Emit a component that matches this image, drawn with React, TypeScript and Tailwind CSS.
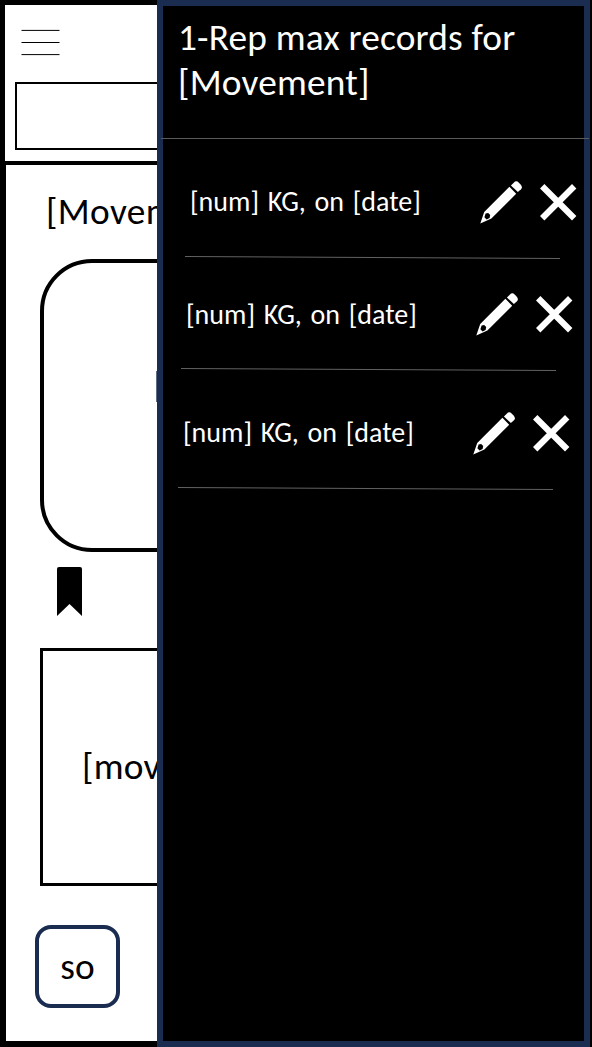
import React from "react";

type RecordRow = { id: number; rowClass: string; textClass: string };

const records: RecordRow[] = [
  { id: 1, rowClass: "h-[120px] pl-[22px]", textClass: "" },
  { id: 2, rowClass: "h-[112px] pl-[18px]", textClass: "pt-[2px]" },
  { id: 3, rowClass: "h-[119px] pl-[15px]", textClass: "" },
];

function PencilIcon() {
  return (
    <svg className="mt-px shrink-0" width="42" height="43" viewBox="0 0 42 43" fill="#fff" aria-hidden="true">
      <path d="M34 1.4Q36.2 -.8 38.9 1.7L40.6 3.4Q43 6.2 41 8.2L37.9 11.1L30.9 4.5Z" />
      <path
        fillRule="evenodd"
        d="M29.4 5.8L36.2 12.8L11.4 37.6L.3 42.5L4.2 31ZM5.6 32.4L4.4 36.2L6.6 38.4L9.6 37L10.2 34L8.2 32Z"
      />
    </svg>
  );
}

function CrossIcon() {
  return (
    <svg className="block" width="37" height="37" viewBox="0 0 37 37" stroke="#fff" strokeWidth="6.2" aria-hidden="true">
      <path d="M2.2 2.2L34.2 34.2M34.2 2.2L2.2 34.2" />
    </svg>
  );
}

function Page() {
  return (
    <main className="flex h-[1047px] w-[157px] shrink-0 flex-col overflow-hidden pt-[5px] pb-[6px] text-black">
      <header className="ml-[5px] h-[156px] bg-white pt-[24px]">
        <button aria-label="Menu" className="ml-[16px] block h-[28px] w-[39px]">
          <svg width="39" height="28" viewBox="0 0 39 28" stroke="#000">
            <path d="M.5 1.4H38.5M.5 13.5H38.5M.5 25.6H38.5" />
          </svg>
        </button>
        <div className="mt-[25px] ml-[10px] h-[68px] w-[400px] border-2 border-black" />
      </header>
      <section className="mt-[4px] ml-[6px] h-[876px] bg-white pt-[24px]">
        <h2 className="ml-[40px] h-[45px] text-[37.33px] leading-[45px] tracking-[0.35px] whitespace-nowrap">[Movement]</h2>
        <div className="mt-[25px] ml-[34px] flex h-[293px] w-[360px] items-center rounded-[52px] border-4 border-black pl-[112px]">
          <div className="mt-[-38px] h-[31px] w-[20px] bg-[#1a2c50]/70" />
        </div>
        <svg className="mt-[15px] ml-[51px] block" width="25" height="49" viewBox="0 0 25 49" aria-hidden="true">
          <path d="M0 2Q0 0 2 0H23Q25 0 25 2V49L12.5 37L0 49Z" />
        </svg>
        <div className="mt-[32px] ml-[34px] flex h-[238px] w-[360px] items-center border-[3px] border-black pb-[2px] pl-[39px]">
          <span className="text-[37.33px] leading-[45px] tracking-[0.2px] whitespace-nowrap">[movement]</span>
        </div>
        <button className="mt-[39px] ml-[29px] flex h-[83px] w-[85px] items-center justify-center rounded-[16px] border-4 border-[#1a2c50] text-[37.33px] leading-[45px]">
          so
        </button>
      </section>
    </main>
  );
}

function Drawer() {
  return (
    <aside className="h-[1047px] w-[433px] shrink-0 border-[6px] border-[#1a2c50] bg-black text-white">
      <div className="h-[132px] pt-[9px] pl-[15px]">
        <h1 className="text-[37.33px] leading-[45px] tracking-[0.2px] whitespace-nowrap">
          1-Rep max records for
          <br />
          [Movement]
        </h1>
      </div>
      <div className="mr-[-5px] ml-[-2px] h-px bg-[#5a5a5a]" />
      <ul>
        {records.map((r) => (
          <li key={r.id} className={`flex flex-col justify-end ${r.rowClass}`}>
            <div className="flex h-[43px] items-center pl-[5px]">
              <span
                className={`w-[290px] shrink-0 text-[28px] leading-[36px] whitespace-nowrap [word-spacing:2.4px] ${r.textClass}`}
              >
                [num] KG, on [date]
              </span>
              <PencilIcon />
              <span className="mt-[2px] ml-[18px] shrink-0">
                <CrossIcon />
              </span>
            </div>
            <svg className="mt-[33px] block shrink-0" width="375" height="3" viewBox="0 0 375 3" stroke="#626262">
              <path d="M0 .5L375 2.5" />
            </svg>
          </li>
        ))}
      </ul>
    </aside>
  );
}

export default function App() {
  return (
    <div className="flex h-[1047px] w-[592px] overflow-hidden bg-black font-['Carlito','Lato',sans-serif]">
      <Page />
      <Drawer />
    </div>
  );
}
